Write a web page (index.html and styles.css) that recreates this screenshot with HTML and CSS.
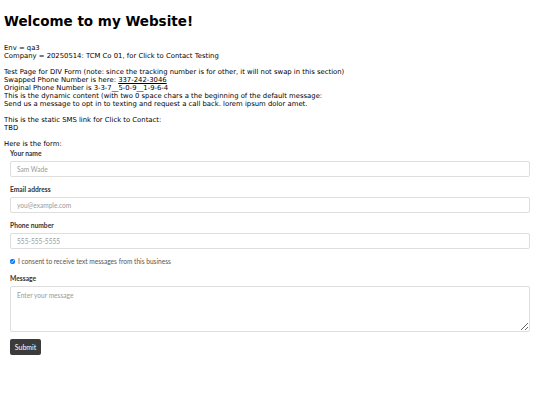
FILE: index.html
```html
<!DOCTYPE html>
<html>
<head>
<meta charset="utf-8">
<link rel="stylesheet" href="styles.css">
</head>
<body>
<h1 class="title">Welcome to my Website!</h1>
<div class="content">
<p class="block">Env = qa3<br>Company = 20250514: TCM Co 01, for Click to Contact Testing</p>
<p class="block">Test Page for DIV Form (note: since the tracking number is for other, it will not swap in this section)<br>Swapped Phone Number is here: <span class="phone">337-242-3046</span><br>Original Phone Number is 3-3-7__5-0-9__1-9-6-4<br>This is the dynamic content (with two 0 space chars a the beginning of the default message:<br>Send us a message to opt in to texting and request a call back. lorem ipsum dolor amet.</p>
<p class="block">This is the static SMS link for Click to Contact:<br>TBD</p>
<p class="intro">Here is the form:</p>
</div>
<form class="form">
  <div class="field">
    <label class="label">Your name</label>
    <input class="input" type="text" placeholder="Sam Wade">
  </div>
  <div class="field">
    <label class="label">Email address</label>
    <input class="input" type="text" placeholder="you@example.com">
  </div>
  <div class="field">
    <label class="label">Phone number</label>
    <input class="input" type="text" placeholder="555-555-5555">
  </div>
  <div class="consent">
    <input class="check" type="checkbox" checked>
    <span>I consent to receive text messages from this business</span>
  </div>
  <div class="field last">
    <label class="label">Message</label>
    <textarea class="textarea" placeholder="Enter your message"></textarea>
  </div>
  <button class="submit" type="button">Submit</button>
</form>
</body>
</html>
```
FILE: styles.css
```css
html, body {
  background: #fff;
}
body {
  margin: 4px;
  font-family: "DejaVu Sans", sans-serif;
  font-size: 6.85px;
  color: #000;
}
.title {
  font-size: 13.5px;
  font-weight: bold;
  margin: 9px 0 9px;
}
.content {
  padding-top: 6px;
  line-height: 8px;
}
.block {
  margin: 0 0 8px;
}
.intro {
  margin: 0 0 1px;
}
.phone {
  text-decoration: underline;
}
.form {
  padding: 0 6px;
  font-family: Lato, sans-serif;
  color: #333;
}
.field {
  display: flex;
  flex-direction: column;
  gap: 4px;
  margin-bottom: 8px;
}
.field.last {
  margin-bottom: 7px;
}
.label {
  font-weight: bold;
  font-size: 6.7px;
  line-height: 8px;
  color: #333;
}
.input, .textarea {
  box-sizing: border-box;
  width: 100%;
  border: 1px solid #dedede;
  border-radius: 2px;
  font-family: Lato, sans-serif;
  font-size: 6.6px;
  padding: 0 6px;
  margin: 0;
  background: #fff;
  color: #333;
}
.input {
  height: 16px;
}
.textarea {
  display: block;
  height: 46px;
  padding-top: 4px;
  resize: vertical;
}
.input::placeholder, .textarea::placeholder {
  color: #9a9a9a;
}
.consent {
  display: flex;
  align-items: center;
  gap: 3px;
  height: 8px;
  margin: 0 0 9px;
  font-size: 6.6px;
  color: #555;
}
.check {
  width: 5px;
  height: 5px;
  margin: 0;
}
.submit {
  display: block;
  font-family: Lato, sans-serif;
  font-size: 7px;
  color: #fff;
  background: #3b3b3b;
  border: none;
  border-radius: 2px;
  height: 16px;
  width: 31px;
  padding: 0;
}
```
